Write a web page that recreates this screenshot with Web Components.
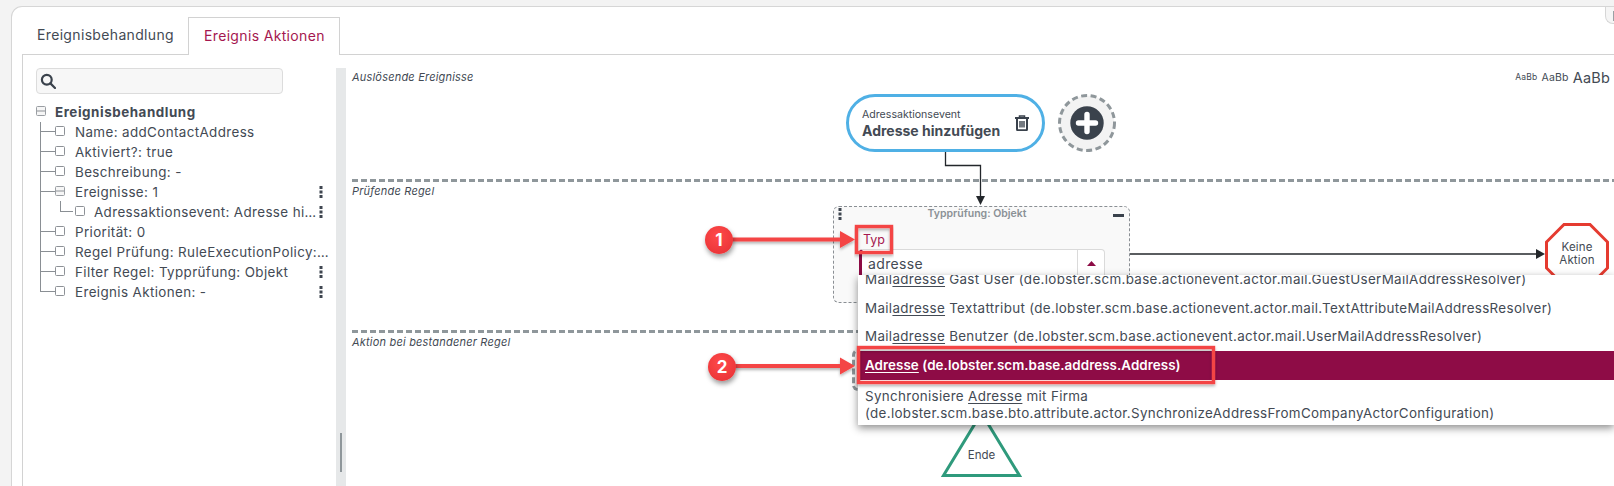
<!DOCTYPE html>
<html lang="de">
<head>
<meta charset="utf-8">
<title>Ereignis Aktionen</title>
<style>
    html, body { margin: 0; height: 486px; overflow: hidden; background: #f3f3f3; }
    body { font-family: Inter, "Noto Sans", sans-serif; color: #434a54; }
</style>
</head>
<body>

<lob-card>
    <lob-tabs slot="tabs"></lob-tabs>
    <lob-tree slot="tree">
        <lob-tree-item root expanded label="Ereignisbehandlung"></lob-tree-item>
        <lob-tree-item label="Name: addContactAddress"></lob-tree-item>
        <lob-tree-item label="Aktiviert?: true"></lob-tree-item>
        <lob-tree-item label="Beschreibung: -"></lob-tree-item>
        <lob-tree-item expanded menu label="Ereignisse: 1"></lob-tree-item>
        <lob-tree-item nested menu label="Adressaktionsevent: Adresse hinzufügen"></lob-tree-item>
        <lob-tree-item label="Priorität: 0"></lob-tree-item>
        <lob-tree-item label="Regel Prüfung: RuleExecutionPolicy: Alle"></lob-tree-item>
        <lob-tree-item menu label="Filter Regel: Typprüfung: Objekt"></lob-tree-item>
        <lob-tree-item last menu label="Ereignis Aktionen: -"></lob-tree-item>
    </lob-tree>
    <lob-canvas slot="canvas"></lob-canvas>
</lob-card>

<script>
(() => {

    // kleine Helfer fuer wiederkehrende Icons
    const kebab = `<svg width="4" height="12" viewBox="0 0 4 12"><rect x="0.5" y="0" width="3" height="3" fill="#3f4650"/><rect x="0.5" y="4.5" width="3" height="3" fill="#3f4650"/><rect x="0.5" y="9" width="3" height="3" fill="#3f4650"/></svg>`;

    class LobCard extends HTMLElement {
        connectedCallback() {
            this.attachShadow({ mode: "open" }).innerHTML = `
                <style>
                    :host { display: block; height: 480px; margin: 6px 0 0 11px; box-sizing: border-box;
                        background: #fff; border: 1px solid #d6d6d6; border-right: 0; border-bottom: 0;
                        border-top-left-radius: 11px; padding: 10px 0 0 10px; position: relative; }
                    .body { display: flex; height: 432px; border: 1px solid #d2d2d2; border-right: 0; border-bottom: 0; }
                    .strip { width: 10px; background: #e6e8e9; margin-top: 13px; position: relative; flex: none; }
                    .strip i { position: absolute; left: 4px; top: 365px; width: 2px; height: 39px; background: #8f979b; }
                    ::slotted([slot=tree]) { width: 313px; flex: none; }
                    ::slotted([slot=canvas]) { flex: 1; min-width: 0; }
                    .notch { position: absolute; right: 0; top: 0; width: 8px; height: 16px; background: #f5f5f5;
                        border: 1px solid #d6d6d6; border-top: 0; border-right: 0; border-bottom-left-radius: 8px; }
                    .notch i { position: absolute; right: 0; top: 4px; width: 1px; height: 10px; background: #9aa0a4; }
                </style>
                <slot name="tabs"></slot>
                <div class="body">
                    <slot name="tree"></slot>
                    <div class="strip"><i></i></div>
                    <slot name="canvas"></slot>
                </div>
                <div class="notch"><i></i></div>
            `;
        }
    }

    class LobTabs extends HTMLElement {
        connectedCallback() {
            this.attachShadow({ mode: "open" }).innerHTML = `
                <style>
                    :host { display: flex; height: 38px; margin-bottom: -1px; position: relative; z-index: 1; font-size: 14px; letter-spacing: .34px; }
                    div { box-sizing: border-box; height: 38px; line-height: 36px; padding: 0 15px; white-space: nowrap; }
                    .tab1 { width: 166px; }
                    .active { width: 152px; color: #a5174f; background: #fff; border: 1px solid #d2d2d2; border-bottom: 0; }
                </style>
                <div class="tab1">Ereignisbehandlung</div>
                <div class="active">Ereignis Aktionen</div>
            `;
        }
    }

    class LobTree extends HTMLElement {
        connectedCallback() {
            this.attachShadow({ mode: "open" }).innerHTML = `
                <style>
                    :host { display: block; box-sizing: border-box; padding: 13px 0 0 13px; position: relative; }
                    .search { box-sizing: border-box; width: 247px; height: 26px; background: #f7f7f7;
                        border: 1px solid #dcdcdc; border-radius: 4px; display: flex; align-items: center; padding-left: 3px; margin-bottom: 8px; }
                    .rows { position: relative; }
                    .rail { position: absolute; left: 4px; top: 20px; width: 0; height: 169px; border-left: 1px solid #8a8f94; }
                </style>
                <div class="search">
                    <svg width="16" height="16" viewBox="0 0 16 16" fill="none" stroke="#3a424c" stroke-width="2.2"><circle cx="6.8" cy="6.8" r="4.9"/><path d="M10.4 10.4L15 15" stroke-linecap="round"/></svg>
                </div>
                <div class="rows"><div class="rail"></div><slot></slot></div>
            `;
        }
    }

    class LobTreeItem extends HTMLElement {
        connectedCallback() {
            const box = this.hasAttribute("expanded")
                ? `<svg class="box" width="10" height="10" viewBox="0 0 10 10"><rect x=".5" y=".5" width="9" height="9" rx="1" fill="#f6f6f6" stroke="#9a9ea3"/><path d="M1 5h8" stroke="#8d9196"/></svg>`
                : `<svg class="box" width="10" height="10" viewBox="0 0 10 10"><rect x=".5" y=".5" width="9" height="9" rx="1" fill="#fff" stroke="#8d9196"/></svg>`;
            this.attachShadow({ mode: "open" }).innerHTML = `
                <style>
                    :host { display: flex; align-items: center; height: 20px; font-size: 13.4px; letter-spacing: .38px; position: relative; white-space: nowrap; width: 293px; }
                    :host([root]) { font-weight: 700; letter-spacing: .55px; }
                    .tick { position: absolute; left: 4px; top: 9px; width: 15px; border-top: 1px solid #8a8f94; }
                    .box { flex: none; margin: 0 10px 0 19px; position: relative; top: -1px; }
                    :host([root]) .box { margin: 0 9px 0 0; }
                    :host([root]) .tick { display: none; }
                    :host([nested]) .box { margin-left: 39px; margin-right: 9px; }
                    :host([nested]) .tick { left: 24px; width: 13px; }
                    :host([nested]) .up { position: absolute; left: 24px; top: -1px; height: 10px; border-left: 1px solid #8a8f94; }
                    .text { overflow: hidden; text-overflow: ellipsis; flex: 1; min-width: 0; }
                    :host([menu]) .text { padding-right: 11px; }
                    .menu { position: absolute; left: 283px; top: 4px; display: flex; }
                </style>
                <span class="tick"></span>
                ${this.hasAttribute("nested") ? `<span class="up"></span>` : ""}
                ${box}
                <span class="text">${this.getAttribute("label")}</span>
                ${this.hasAttribute("menu") ? `<span class="menu">${kebab}</span>` : ""}
            `;
        }
    }

    class LobLane extends HTMLElement {
        connectedCallback() {
            this.attachShadow({ mode: "open" }).innerHTML = `
                <style>
                    :host { display: block; box-sizing: border-box; padding-left: 6px; }
                    :host([first]) { padding-top: 15px; }
                    .sep { height: 3px; background: repeating-linear-gradient(90deg, #8f979b 0 6px, transparent 6px 9px); }
                    :host([first]) .sep { display: none; }
                    .head { display: flex; justify-content: space-between; align-items: center; font-size: 11px; font-style: italic; letter-spacing: .2px; margin-top: 2px; height: 14px; }
                    :host([first]) .head { margin-top: 0; }
                    .sizes { font-style: normal; display: flex; gap: 4px; align-items: center; padding-right: 4px; letter-spacing: .2px; }
                </style>
                <div class="sep"></div>
                <div class="head"><span>${this.getAttribute("label")}</span><span class="sizes"><slot></slot></span></div>
            `;
        }
    }

    class LobEventNode extends HTMLElement {
        connectedCallback() {
            this.attachShadow({ mode: "open" }).innerHTML = `
                <style>
                    :host { display: flex; align-items: center; box-sizing: border-box; position: absolute; left: 500px; top: 39px; width: 199px; height: 58px;
                        background: #fff; border: 3px solid #4fb0e5; border-radius: 29px; padding: 0 13px 0 13px; }
                    .t { flex: 1; white-space: nowrap; }
                    small { display: block; font-size: 10.6px; line-height: 14px; }
                    b { display: block; font-size: 14px; line-height: 17px; }
                </style>
                <div class="t"><small>${this.getAttribute("type")}</small><b>${this.getAttribute("name")}</b></div>
                <svg width="14" height="16" viewBox="0 0 14 16" fill="none" stroke="#3a424c"><path d="M0 3h14" stroke-width="2"/><path d="M4.5 2.5V1h5v1.5" stroke-width="1.5"/><path d="M2 3.5V14.2q0 1 1 1h8q1 0 1-1V3.5" stroke-width="2"/><path d="M5 6v6.5M7 6v6.5M9 6v6.5" stroke-width="1.4"/></svg>
            `;
        }
    }

    class LobAddButton extends HTMLElement {
        connectedCallback() {
            this.attachShadow({ mode: "open" }).innerHTML = `
                <style>:host { display: block; position: absolute; left: 712px; top: 39px; width: 58px; height: 58px; }</style>
                <svg width="58" height="58" viewBox="0 0 58 58">
                    <circle cx="29" cy="29" r="27.5" fill="#f3f3f3" stroke="#8f979b" stroke-width="3" stroke-dasharray="6 3.5"/>
                    <circle cx="29" cy="29" r="16.7" fill="#3a424c"/>
                    <path d="M29 20.5v17M20.5 29h17" stroke="#fff" stroke-width="5.4" stroke-linecap="round"/>
                </svg>
            `;
        }
    }

    class LobRuleBox extends HTMLElement {
        connectedCallback() {
            this.attachShadow({ mode: "open" }).innerHTML = `
                <style>
                    :host { display: block; box-sizing: border-box; position: absolute; left: 487px; top: 151px; width: 297px; height: 97px;
                        background: #f9f9f9; border: 1px dashed #8a8f94; border-radius: 6px; }
                    .head { position: relative; height: 13px; box-sizing: border-box; padding: 1px 9px 0 0; text-align: center; font-size: 10.5px; line-height: 12px; color: #8b9196; font-weight: 600; }
                    .head .k { position: absolute; left: 4px; top: 1px; }
                    .head i { position: absolute; right: 5px; top: 7px; width: 11px; height: 3px; background: #3a424c; }
                    label { display: block; margin: 12px 0 0 29px; height: 16px; font-size: 12.5px; line-height: 16px; color: #a5174f; }
                    .sel { box-sizing: border-box; display: flex; align-items: center; margin: 1px 0 0 25px; width: 246px; height: 28px;
                        background: #fff; border: 1px solid #dadada; border-left: 3px solid #8c0b45; border-radius: 4px 4px 0 0; font-size: 14px; letter-spacing: .35px; padding-left: 6px; }
                    .sel span { flex: 1; }
                    .sel em { width: 26px; height: 100%; border-left: 1px solid #dadada; display: flex; align-items: center; justify-content: center; }
                </style>
                <div class="head"><span class="k">${kebab}</span>${this.getAttribute("title")}<i></i></div>
                <label>Typ</label>
                <div class="sel"><span>adresse</span><em><svg width="9" height="5" viewBox="0 0 9 5"><path d="M0 5L4.5 0L9 5z" fill="#8c0b45"/></svg></em></div>
            `;
        }
    }

    class LobDropdown extends HTMLElement {
        connectedCallback() {
            this.attachShadow({ mode: "open" }).innerHTML = `
                <style>
                    :host { display: block; position: absolute; left: 512px; top: 220px; right: 0; height: 150px; background: #fff;
                        box-shadow: 0 3px 8px rgba(0,0,0,.45); overflow: hidden; font-size: 13.4px; letter-spacing: .33px; z-index: 2; }
                    ::slotted(*) { display: block; }
                    .list { margin-top: -10px; }
                </style>
                <div class="list"><slot></slot></div>
            `;
        }
    }

    class LobOption extends HTMLElement {
        connectedCallback() {
            const before = this.getAttribute("before") || "";
            const after = this.getAttribute("after") || "";
            this.attachShadow({ mode: "open" }).innerHTML = `
                <style>
                    :host { display: block; padding: 6px 7px; line-height: 16.5px; min-height: 16.5px; }
                    :host([selected]) { background: #8e0c46; color: #fff; font-weight: 600; letter-spacing: .05px; padding-top: 6.5px; padding-bottom: 6.5px; }
                    u { text-underline-offset: 2px; }
                </style>
                ${before}<u>${this.getAttribute("match")}</u>${after}
            `;
        }
    }

    class LobStopNode extends HTMLElement {
        connectedCallback() {
            this.attachShadow({ mode: "open" }).innerHTML = `
                <style>
                    :host { display: block; position: absolute; left: 1199px; top: 168px; width: 64px; height: 64px; }
                    svg { position: absolute; inset: 0; }
                    div { position: relative; text-align: center; padding-top: 18px; font-size: 11.5px; line-height: 13px; letter-spacing: .15px; }
                </style>
                <svg width="64" height="64" viewBox="0 0 64 64"><path d="M19 1.5H45L62.5 19V45L45 62.5H19L1.5 45V19z" fill="#fff" stroke="#e53b30" stroke-width="3"/></svg>
                <div>Keine<br>Aktion</div>
            `;
        }
    }

    class LobEndNode extends HTMLElement {
        connectedCallback() {
            this.attachShadow({ mode: "open" }).innerHTML = `
                <style>
                    :host { display: block; position: absolute; left: 594px; top: 355px; width: 84px; height: 70px; }
                    svg { position: absolute; inset: 0; }
                    div { position: absolute; left: 0; right: 1px; top: 38px; text-align: center; font-size: 11.5px; line-height: 14px; }
                </style>
                <svg width="84" height="70" viewBox="0 0 84 70"><path d="M41.5 3L79.5 65.5H3.5z" fill="#fff" stroke="#2f9a7c" stroke-width="3"/></svg>
                <div>Ende</div>
            `;
        }
    }

    class LobCalloutBadge extends HTMLElement {
        connectedCallback() {
            this.attachShadow({ mode: "open" }).innerHTML = `
                <style>
                    :host { display: flex; align-items: center; justify-content: center; position: absolute; width: 28px; height: 28px; border-radius: 50%;
                        left: var(--x); top: var(--y); z-index: 4; color: #fff; font-weight: 700; font-size: 17px;
                        background: radial-gradient(circle at 45% 35%, #ff4a4a, #e52f33); box-shadow: 1px 3px 5px rgba(0,0,0,.4); }
                </style>
                <slot></slot>
            `;
        }
    }

    class LobCanvas extends HTMLElement {
        connectedCallback() {
            this.attachShadow({ mode: "open" }).innerHTML = `
                <style>
                    :host { display: block; position: relative; overflow: hidden; color: #434a54; }
                    .wires, .marks { position: absolute; left: 0; top: 0; pointer-events: none; }
                    .marks { z-index: 3; }
                    .ghost { position: absolute; left: 506px; top: 294px; width: 20px; height: 42px; box-sizing: border-box; border: 3px dashed #8f979b; border-radius: 6px; }
                    .a { font-size: 8.5px; } .b { font-size: 10.5px; } .c { font-size: 14.5px; }
                </style>
                <lob-lane first label="Auslösende Ereignisse" style="height:124px"><span class="a">AaBb</span><span class="b">AaBb</span><span class="c">AaBb</span></lob-lane>
                <lob-lane label="Prüfende Regel" style="height:151px"></lob-lane>
                <lob-lane label="Aktion bei bestandener Regel"></lob-lane>
                <svg class="wires" width="1268" height="431" viewBox="346 55 1268 431" fill="none" stroke="#23272b" stroke-width="1.3">
                    <path d="M945.5 152V165.5H980.5V198"/>
                    <path d="M976 196H985L980.5 205z" fill="#23272b" stroke="none"/>
                    <path d="M1130 254H1537"/>
                    <path d="M1536 249V259L1545 254z" fill="#23272b" stroke="none"/>
                </svg>
                <div class="ghost"></div>
                <lob-event-node type="Adressaktionsevent" name="Adresse hinzufügen"></lob-event-node>
                <lob-add-button></lob-add-button>
                <lob-rule-box title="Typprüfung: Objekt"></lob-rule-box>
                <lob-stop-node></lob-stop-node>
                <lob-end-node></lob-end-node>
                <lob-dropdown>
                    <lob-option before="Mail" match="adresse" after=" Gast User (de.lobster.scm.base.actionevent.actor.mail.GuestUserMailAddressResolver)"></lob-option>
                    <lob-option before="Mail" match="adresse" after=" Textattribut (de.lobster.scm.base.actionevent.actor.mail.TextAttributeMailAddressResolver)"></lob-option>
                    <lob-option before="Mail" match="adresse" after=" Benutzer (de.lobster.scm.base.actionevent.actor.mail.UserMailAddressResolver)"></lob-option>
                    <lob-option selected match="Adresse" after=" (de.lobster.scm.base.address.Address)"></lob-option>
                    <lob-option style="padding-top:8px" before="Synchronisiere " match="Adresse" after=" mit Firma<br>(de.lobster.scm.base.bto.attribute.actor.SynchronizeAddressFromCompanyActorConfiguration)"></lob-option>
                </lob-dropdown>
                <svg class="marks" width="1268" height="431" viewBox="346 55 1268 431" fill="none">
                    <defs><filter id="s" x="-5%" y="-60%" width="110%" height="220%"><feDropShadow dx="0" dy="2" stdDeviation="1.5" flood-color="#000" flood-opacity=".3"/></filter></defs>
                    <rect x="856.5" y="226.5" width="35" height="26" stroke="#f44444" stroke-width="3.4" filter="url(#s)"/>
                    <rect x="858.5" y="347.5" width="355" height="35" stroke="#f44444" stroke-width="3.4" filter="url(#s)"/>
                    <path d="M730 237.5H840V231L855 239.5L840 248V241.5H730z" fill="#f44444" filter="url(#s)"/>
                    <path d="M733 364H840V357.5L855 366L840 374.5V368H733z" fill="#f44444" filter="url(#s)"/>
                </svg>
                <lob-callout-badge style="--x:359px;--y:171px">1</lob-callout-badge>
                <lob-callout-badge style="--x:362px;--y:298px">2</lob-callout-badge>
            `;
        }
    }

    customElements.define("lob-card", LobCard);
    customElements.define("lob-tabs", LobTabs);
    customElements.define("lob-tree", LobTree);
    customElements.define("lob-tree-item", LobTreeItem);
    customElements.define("lob-lane", LobLane);
    customElements.define("lob-event-node", LobEventNode);
    customElements.define("lob-add-button", LobAddButton);
    customElements.define("lob-rule-box", LobRuleBox);
    customElements.define("lob-dropdown", LobDropdown);
    customElements.define("lob-option", LobOption);
    customElements.define("lob-stop-node", LobStopNode);
    customElements.define("lob-end-node", LobEndNode);
    customElements.define("lob-callout-badge", LobCalloutBadge);
    customElements.define("lob-canvas", LobCanvas);

})()
</script>
</body>
</html>
